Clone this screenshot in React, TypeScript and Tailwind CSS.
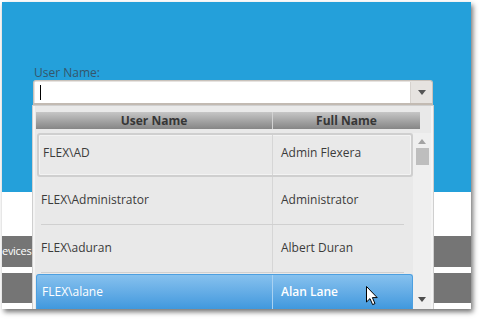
import React from 'react';

// rows shown in the user picker drop-down
const users = [
  { login: 'FLEX\\AD', name: 'Admin Flexera', focused: true },
  { login: 'FLEX\\Administrator', name: 'Administrator' },
  { login: 'FLEX\\aduran', name: 'Albert Duran' },
  { login: 'FLEX\\alane', name: 'Alan Lane', selected: true },
];

const font = { fontFamily: '"Open Sans", "Noto Sans", sans-serif' };

const Cursor = () => (
  <svg className="absolute left-[363px] top-[283px]" width="14" height="22" viewBox="0 0 14 22">
    <path
      d="M1.5 1.5 L1.5 17 L5 13.6 L7.6 19.6 L10 18.6 L7.4 12.6 L12.2 12.6 Z"
      fill="#fff"
      stroke="#000"
      strokeWidth="1"
      strokeLinejoin="miter"
    />
  </svg>
);

const UserPicker = () => (
  <div className="absolute left-[31px] top-[63px] w-[400px]">
    <div className="h-[15px] text-[12px] leading-[15px] text-[#35566b] pl-[1px]">User Name:</div>

    {/* combo box */}
    <div className="flex h-[26px] rounded-t-[3px] border border-[#c9c2bb] border-b-[3px] border-b-[#c2bab2] bg-[#e6e3e0]">
      <div className="flex-1 bg-white ml-[1px] mt-[1px] flex items-center pl-[5px]">
        <div className="w-[1px] h-[15px] bg-black" />
      </div>
      <div className="w-[1px] bg-[#d6d2ce] mt-[1px]" />
      <div className="w-[21px] flex items-center justify-center">
        <svg width="8" height="5" viewBox="0 0 8 5">
          <path d="M0 0 H8 L4 5 Z" fill="#555" />
        </svg>
      </div>
    </div>

    {/* drop-down panel */}
    <div className="h-[204px] bg-[#e9e9e9] border-l-[2px] border-r-[2px] border-[#f4f4f4] shadow-[0_0_0_1px_#cfcfcf] flex flex-col">
      <div className="flex pl-[1px] pt-[6px] pr-[11px]">
        <div className="w-[236px] h-[17px] flex items-center justify-center bg-gradient-to-b from-[#c6c6c6] to-[#868686] text-[12px] font-bold text-[#363636]">
          User Name
        </div>
        <div className="w-[1px] bg-[#d3d3d3]" />
        <div className="flex-1 h-[17px] flex items-center justify-center bg-gradient-to-b from-[#c6c6c6] to-[#868686] text-[12px] font-bold text-[#363636]">
          Full Name
        </div>
      </div>

      <div className="flex flex-1 pt-[4px] min-h-0">
        <div className="flex-1 flex flex-col pl-[1px]">
          {users.map((u, i) => {
            if (u.selected) {
              return (
                <div
                  key={i}
                  className="flex h-[36px] mt-[1px] rounded-t-[3px] border border-b-0 border-[#4c9fe0] bg-gradient-to-b from-[#86c1ee] to-[#3d97dd] text-white text-[12px]"
                >
                  <div className="w-[235px] flex items-center pl-[5px] pb-[1px]">{u.login}</div>
                  <div className="w-[1px] bg-[#a9d2f2]" />
                  <div className="flex-1 flex items-center pl-[8px] pb-[1px] font-semibold">{u.name}</div>
                </div>
              );
            }
            if (u.focused) {
              return (
                <div
                  key={i}
                  className="flex h-[44px] ml-[1px] rounded-[3px] border-2 border-[#cfcfcf] shadow-[inset_0_0_0_1px_#f3f3f3] text-[12px] text-[#3b3b3b]"
                >
                  <div className="w-[233px] flex items-center pl-[4px] pb-[5px]">{u.login}</div>
                  <div className="w-[1px] bg-[#d6d6d6]" />
                  <div className="flex-1 flex items-center pl-[8px] pb-[5px]">{u.name}</div>
                </div>
              );
            }
            return (
              <div key={i} className="flex flex-col h-[48px] text-[12px] text-[#3b3b3b]">
                <div className="flex flex-1">
                  <div className="w-[236px] flex items-center pl-[5px] pb-[2px]">{u.login}</div>
                  <div className="w-[1px] bg-[#d6d6d6]" />
                  <div className="flex-1 flex items-center pl-[8px] pb-[2px]">{u.name}</div>
                </div>
                <div className="h-[1px] bg-[#d0d0d0] ml-[5px] mr-[9px]" />
              </div>
            );
          })}
        </div>

        {/* scrollbar */}
        <div className="w-[18px] bg-[#efefef] flex flex-col items-center pt-[6px]">
          <svg width="8" height="5" viewBox="0 0 8 5">
            <path d="M4 0 L8 5 H0 Z" fill="#a3a3a3" />
          </svg>
          <div className="w-[13px] h-[17px] bg-[#bebebe] mt-[4px]" />
          <div className="flex-1" />
          <svg width="8" height="5" viewBox="0 0 8 5" className="mb-[8px]">
            <path d="M0 0 H8 L4 5 Z" fill="#4d4d4d" />
          </svg>
        </div>
      </div>
    </div>
  </div>
);

export default function App() {
  return (
    <div className="w-[479px] h-[319px] bg-white pl-[2px] pt-[2px]" style={font}>
      <div className="relative w-[469px] h-[307px] overflow-hidden shadow-[2px_3px_5px_rgba(0,0,0,0.55)] flex flex-col">
        <div className="h-[190px] bg-[#24a0da]" />
        <div className="h-[44px] bg-white" />
        <div className="h-[31px] bg-[#757575] flex items-center overflow-hidden">
          <span className="text-[11px] tracking-[-0.3px] text-white">evices</span>
        </div>
        <div className="h-[6px] bg-white" />
        <div className="h-[30px] bg-[#757575]" />
        <div className="flex-1 bg-white" />
        <UserPicker />
        <Cursor />
      </div>
    </div>
  );
}
